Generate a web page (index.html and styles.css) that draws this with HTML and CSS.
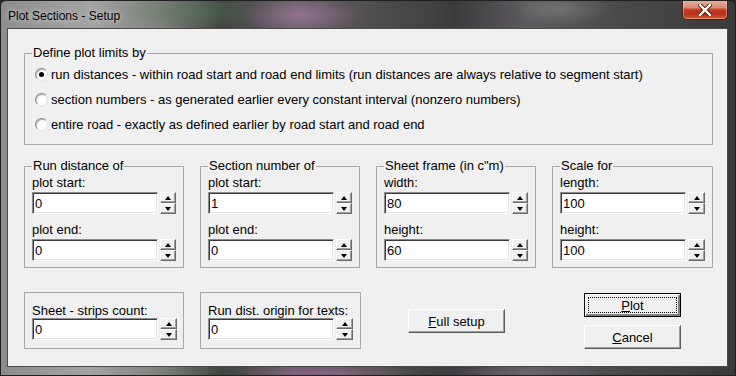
FILE: index.html
```html
<!DOCTYPE html>
<html lang="en">
<head>
  <meta charset="UTF-8" />
  <title>Plot Sections - Setup</title>
  <link rel="stylesheet" href="styles.css">
</head>
<body>
  <div class="window">
    <div class="titlebar">
      <span class="title">Plot Sections - Setup</span>
      <span class="close">
        <svg width="14" height="12" viewBox="0 0 14 12">
          <path d="M2 1 L12 11 M12 1 L2 11" stroke="#4a1a10" stroke-width="4.2" stroke-linecap="square"/>
          <path d="M2 1 L12 11 M12 1 L2 11" stroke="#fff" stroke-width="2.4" stroke-linecap="square"/>
        </svg>
      </span>
    </div>

    <div class="client">
      <fieldset class="group limits">
        <legend>Define plot limits by</legend>
        <label class="radio"><span class="mark checked"></span>run distances - within road start and road end limits (run distances are always relative to segment start)</label>
        <label class="radio"><span class="mark"></span>section numbers - as generated earlier every constant interval (nonzero numbers)</label>
        <label class="radio"><span class="mark"></span>entire road - exactly as defined earlier by road start and road end</label>
      </fieldset>

      <div class="ranges">
        <fieldset class="group range">
          <legend>Run distance of</legend>
          <label class="field-label">plot start:</label>
          <div class="spin"><input type="text" value="0"><span class="arrows"><span class="up"></span><span class="down"></span></span></div>
          <label class="field-label second">plot end:</label>
          <div class="spin"><input type="text" value="0"><span class="arrows"><span class="up"></span><span class="down"></span></span></div>
        </fieldset>

        <fieldset class="group range">
          <legend>Section number of</legend>
          <label class="field-label">plot start:</label>
          <div class="spin"><input type="text" value="1"><span class="arrows"><span class="up"></span><span class="down"></span></span></div>
          <label class="field-label second">plot end:</label>
          <div class="spin"><input type="text" value="0"><span class="arrows"><span class="up"></span><span class="down"></span></span></div>
        </fieldset>

        <fieldset class="group range">
          <legend>Sheet frame (in c"m)</legend>
          <label class="field-label">width:</label>
          <div class="spin"><input type="text" value="80"><span class="arrows"><span class="up"></span><span class="down"></span></span></div>
          <label class="field-label second">height:</label>
          <div class="spin"><input type="text" value="60"><span class="arrows"><span class="up"></span><span class="down"></span></span></div>
        </fieldset>

        <fieldset class="group range">
          <legend>Scale for</legend>
          <label class="field-label">length:</label>
          <div class="spin"><input type="text" value="100"><span class="arrows"><span class="up"></span><span class="down"></span></span></div>
          <label class="field-label second">height:</label>
          <div class="spin"><input type="text" value="100"><span class="arrows"><span class="up"></span><span class="down"></span></span></div>
        </fieldset>
      </div>

      <div class="bottom">
        <div class="group plain strips">
          <label class="field-label">Sheet - strips count:</label>
          <div class="spin"><input type="text" value="0"><span class="arrows"><span class="up"></span><span class="down"></span></span></div>
        </div>
        <div class="group plain origin">
          <label class="field-label">Run dist. origin for texts:</label>
          <div class="spin"><input type="text" value="0"><span class="arrows"><span class="up"></span><span class="down"></span></span></div>
        </div>
        <button type="button" class="btn full"><u>F</u>ull setup</button>
        <div class="actions">
          <button type="button" class="btn default"><span class="focus"><u>P</u>lot</span></button>
          <button type="button" class="btn"><u>C</u>ancel</button>
        </div>
      </div>
    </div>
  </div>
</body>
</html>
```

FILE: styles.css
```css
* {
  box-sizing: border-box;
  margin: 0;
  padding: 0;
}
body {
  background: #2a2a2a;
  font-family: 'Liberation Sans', Arial, sans-serif;
  font-size: 13px;
  color: #000;
}
.window {
  width: 736px;
  height: 376px;
  overflow: hidden;
  background:
    radial-gradient(ellipse 60px 20px at 300px 14px, rgba(190, 150, 190, 0.45), transparent),
    radial-gradient(ellipse 70px 18px at 190px 10px, rgba(90, 120, 90, 0.5), transparent),
    radial-gradient(ellipse 50px 16px at 560px 8px, rgba(140, 150, 140, 0.45), transparent),
    radial-gradient(ellipse 90px 10px at 330px 372px, rgba(170, 120, 160, 0.5), transparent),
    radial-gradient(ellipse 80px 8px at 520px 372px, rgba(120, 110, 130, 0.5), transparent),
    linear-gradient(90deg, #8d8d8d 0%, #a3a3a3 12%, #7d817b 22%, #3f4640 30%, #6a5a68 40%, #4b4d4a 52%, #3b3b3d 62%, #5e5b60 72%, #4a4a4a 84%, #3a3a3a 100%);
  border: 1px solid #202020;
  border-radius: 6px 6px 0 0;
}
.titlebar {
  display: flex;
  height: 27px;
  padding-left: 7px;
}
.title {
  font-size: 12px;
  line-height: 14px;
  padding-top: 8px;
  color: #000;
  text-shadow: 0 0 6px rgba(255, 255, 255, 0.8);
}
.close {
  margin-left: auto;
  margin-right: 7px;
  margin-top: -1px;
  width: 46px;
  height: 20px;
  display: flex;
  align-items: center;
  justify-content: center;
  background: linear-gradient(#e8b2a4 0%, #d88a74 40%, #c43a22 52%, #b8321c 75%, #d05e3c 100%);
  border: 1px solid #4d1c12;
  border-top: none;
  border-radius: 0 0 5px 5px;
  box-shadow: inset 0 0 0 1px rgba(255, 210, 200, 0.45);
}

/* dialog body */
.client {
  margin-left: 6px;
  width: 721px;
  height: 339px;
  background: #f0f0f0;
  border: 1px solid #4a4a4a;
  padding: 17px 0 0 16px;
}
.group {
  border: 1px solid #a8a8a8;
}
fieldset.group {
  min-width: 0;
  padding-left: 7px;
  padding-right: 7px;
}
legend {
  line-height: 14px;
  padding: 0 1px;
}

.limits {
  width: 689px;
  padding-top: 2px;
  padding-bottom: 7px;
}
.radio {
  display: flex;
  align-items: center;
  height: 25px;
  padding-left: 3px;
  white-space: nowrap;
}
.mark {
  width: 13px;
  height: 13px;
  border-radius: 50%;
  margin-right: 3px;
  background: #fff;
  border: 1px solid;
  border-color: #8a8a8a #e4e4e4 #e4e4e4 #8a8a8a;
  box-shadow: inset 1px 1px 0 #b8b8b8;
  position: relative;
}
.mark.checked::after {
  content: "";
  position: absolute;
  left: 3px;
  top: 3px;
  width: 5px;
  height: 5px;
  border-radius: 50%;
  background: #000;
}

.ranges {
  display: grid;
  grid-template-columns: 160px 160px 160px 161px;
  column-gap: 16px;
  margin-top: 14px;
}
.range {
  padding-top: 2px;
  padding-bottom: 6px;
}
.field-label {
  display: block;
  line-height: 15px;
  margin-bottom: 2px;
}
.field-label.second {
  margin-top: 8px;
}
.spin {
  display: flex;
  height: 22px;
}
.spin input {
  width: 126px;
  height: 22px;
  font-family: 'Liberation Sans', Arial, sans-serif;
  font-size: 13px;
  padding: 1px 0 0 2px;
  background: #fff;
  border: 1px solid;
  border-color: #8c8c8c #ffffff #ffffff #8c8c8c;
  box-shadow: inset 1px 1px 0 #3a3a3a, inset -1px -1px 0 #e6e6e6;
  outline: none;
}
.arrows {
  display: flex;
  flex-direction: column;
  width: 17px;
  margin-left: 2px;
}
.arrows span {
  flex: 1;
  display: flex;
  align-items: center;
  justify-content: center;
  background: #f0f0f0;
  border: 1px solid;
  border-color: #fff #6a6a6a #6a6a6a #fff;
  box-shadow: inset -1px -1px 0 #a0a0a0;
}
.arrows .up::before {
  content: "";
  border-left: 3.5px solid transparent;
  border-right: 3.5px solid transparent;
  border-bottom: 4px solid #000;
}
.arrows .down::before {
  content: "";
  border-left: 3.5px solid transparent;
  border-right: 3.5px solid transparent;
  border-top: 4px solid #000;
}

.bottom {
  display: flex;
  align-items: flex-start;
  margin-top: 24px;
}
.plain {
  height: 57px;
  padding: 10px 0 0 7px;
}
.plain .field-label {
  margin-bottom: 0;
}
.strips {
  width: 160px;
}
.origin {
  width: 161px;
  margin-left: 16px;
}
.btn {
  width: 97px;
  height: 24px;
  font-family: 'Liberation Sans', Arial, sans-serif;
  font-size: 13px;
  color: #000;
  background: #f0f0f0;
  border: 1px solid;
  border-color: #fff #5a5a5a #5a5a5a #fff;
  box-shadow: inset -1px -1px 0 #a0a0a0;
}
.full {
  margin-left: 47px;
  margin-top: 17px;
}
.actions {
  display: flex;
  flex-direction: column;
  gap: 8px;
  margin-left: 79px;
  margin-top: 1px;
}
.default {
  border: 1px solid #000;
  box-shadow: inset 1px 1px 0 #fff, inset -2px -2px 0 #808080;
  padding: 3px;
}
.focus {
  display: block;
  height: 100%;
  line-height: 15px;
  border: 1px dotted #000;
}
```
